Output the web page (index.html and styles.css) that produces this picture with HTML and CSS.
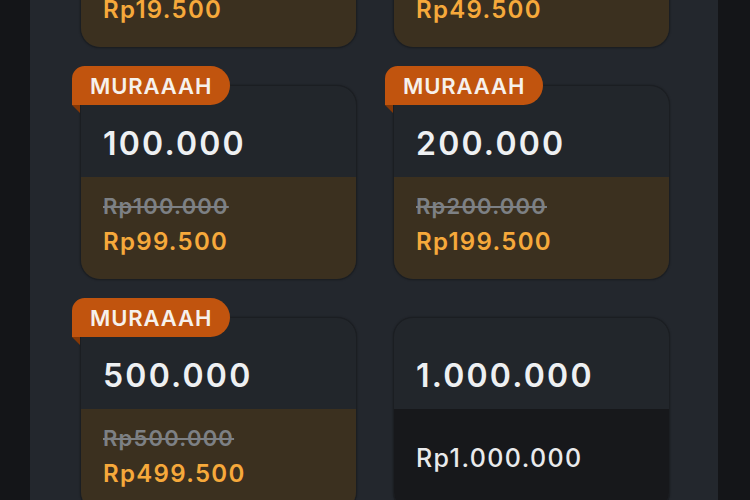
FILE: index.html
```html
<!DOCTYPE html>
<html lang="id">
<head>
    <meta charset="UTF-8">
    <meta name="viewport" content="width=device-width, initial-scale=1.0">
    <title>Pilih Nominal</title>
    <link rel="stylesheet" href="styles.css">
</head>
<body>
    <div class="panel">
        <div class="grid">
            <div class="item">
                <span class="badge">MURAAAH</span>
                <div class="card">
                    <div class="amount">20.000</div>
                    <div class="price promo">
                        <span class="old">Rp20.000</span>
                        <span class="new">Rp19.500</span>
                    </div>
                </div>
            </div>
            <div class="item">
                <span class="badge">MURAAAH</span>
                <div class="card">
                    <div class="amount">50.000</div>
                    <div class="price promo">
                        <span class="old">Rp50.000</span>
                        <span class="new">Rp49.500</span>
                    </div>
                </div>
            </div>
            <div class="item">
                <span class="badge">MURAAAH</span>
                <div class="card">
                    <div class="amount">100.000</div>
                    <div class="price promo">
                        <span class="old">Rp100.000</span>
                        <span class="new">Rp99.500</span>
                    </div>
                </div>
            </div>
            <div class="item">
                <span class="badge">MURAAAH</span>
                <div class="card">
                    <div class="amount">200.000</div>
                    <div class="price promo">
                        <span class="old">Rp200.000</span>
                        <span class="new">Rp199.500</span>
                    </div>
                </div>
            </div>
            <div class="item">
                <span class="badge">MURAAAH</span>
                <div class="card">
                    <div class="amount">500.000</div>
                    <div class="price promo">
                        <span class="old">Rp500.000</span>
                        <span class="new">Rp499.500</span>
                    </div>
                </div>
            </div>
            <div class="item">
                <div class="card">
                    <div class="amount">1.000.000</div>
                    <div class="price plain">
                        <span class="regular">Rp1.000.000</span>
                    </div>
                </div>
            </div>
        </div>
    </div>
</body>
</html>
```

FILE: styles.css
```css
:root {
    --page-bg: #141518;
    --panel-bg: #23272d;
    --card-bg: #22262b;
    --promo-bg: #3b301f;
    --plain-bg: #17181b;
    --badge-bg: #c1540e;
    --badge-fold: #853806;
    --amount-color: #eef0f2;
    --old-color: #7d8084;
    --new-color: #f6a93b;
}

* {
    margin: 0;
    padding: 0;
    box-sizing: border-box;
}

html, body {
    height: 100%;
    overflow: hidden;
}

body {
    background-color: var(--page-bg);
    font-family: "Inter", "Liberation Sans", sans-serif;
}

.panel {
    width: 688px;
    height: 100%;
    margin-left: 30px;
    background-color: var(--panel-bg);
    overflow: hidden;
}

.grid {
    display: grid;
    grid-template-columns: 277px 277px;
    column-gap: 36px;
    row-gap: 37px;
    padding-left: 50px;
    margin-top: -147px;
}

.item {
    position: relative;
}

.card {
    height: 195px;
    border-radius: 20px;
    overflow: hidden;
    background-color: var(--card-bg);
    border: 1px solid #1b1e22;
    box-shadow: 0 0 2px rgba(0, 0, 0, 0.35);
    display: flex;
    flex-direction: column;
}

.amount {
    height: 91px;
    padding: 42px 0 0 22px;
    font-size: 32px;
    line-height: 32px;
    font-weight: 600;
    letter-spacing: 2.2px;
    color: var(--amount-color);
}

.price {
    flex: 1;
    display: flex;
    flex-direction: column;
    padding-left: 22px;
}

.price.promo {
    background-color: var(--promo-bg);
    padding-top: 12px;
}

.price.plain {
    background-color: var(--plain-bg);
    justify-content: center;
    padding-bottom: 4px;
}

.old,
.new {
    line-height: 35px;
    font-weight: 600;
}

.old {
    font-size: 22px;
    letter-spacing: 1.2px;
    color: var(--old-color);
    text-decoration: line-through;
    text-decoration-thickness: 2px;
}

.new {
    font-size: 24px;
    letter-spacing: 1.3px;
    color: var(--new-color);
}

.regular {
    font-size: 25px;
    font-weight: 500;
    letter-spacing: 1.4px;
    color: #e9eaec;
}

.badge {
    position: absolute;
    left: -8px;
    top: -19px;
    z-index: 2;
    height: 39px;
    padding: 0 18px;
    display: flex;
    align-items: center;
    background-color: var(--badge-bg);
    border-radius: 13px 20px 20px 0;
    font-size: 22px;
    font-weight: 600;
    letter-spacing: 0.9px;
    color: #f6f1ec;
}

.badge::after {
    content: "";
    position: absolute;
    left: 0;
    top: 39px;
    width: 8px;
    height: 8px;
    background-color: var(--badge-fold);
    clip-path: polygon(0 0, 100% 0, 100% 100%);
}
```
